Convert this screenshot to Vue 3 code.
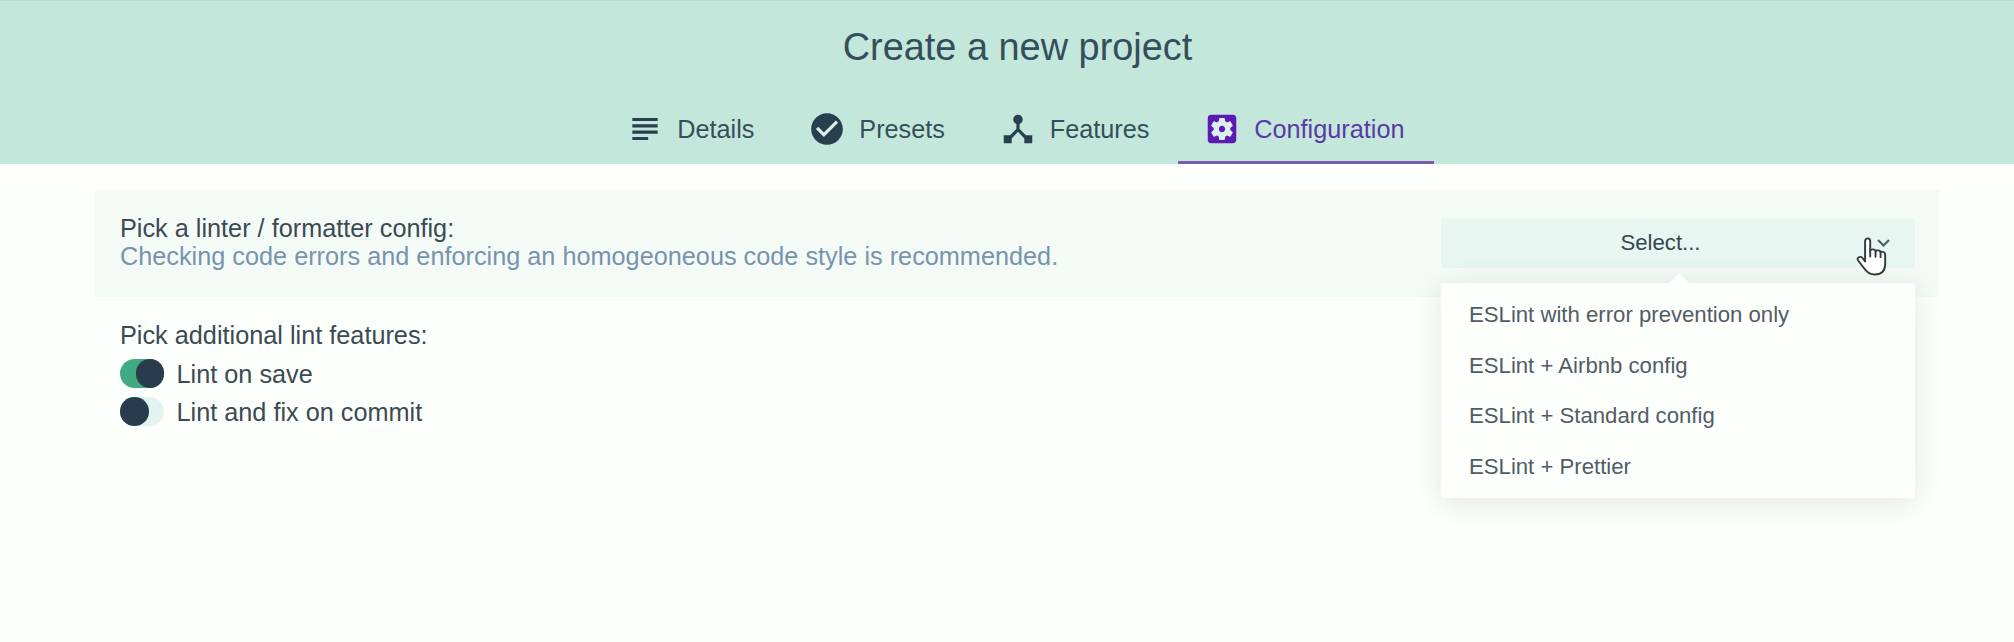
<script setup>
const tabs = [
  {
    label: 'Details',
    icon: 'M14 17H4v2h10v-2zm6-8H4v2h16V9zM4 15h16v-2H4v2zM4 5v2h16V5H4z',
  },
  {
    label: 'Presets',
    icon: 'M12 2C6.48 2 2 6.48 2 12s4.48 10 10 10 10-4.48 10-10S17.52 2 12 2zm-2 15l-5-5 1.41-1.41L10 14.17l7.59-7.59L19 8l-9 9z',
    filled: true,
  },
  {
    label: 'Features',
    icon: 'M17 16l-4-4V8.82C14.16 8.4 15 7.3 15 6c0-1.66-1.34-3-3-3S9 4.34 9 6c0 1.3.84 2.4 2 2.82V12l-4 4H3v5h5v-3.05l4-4.2 4 4.2V21h5v-5h-4z',
  },
  {
    label: 'Configuration',
    icon: 'M12 10c-1.1 0-2 .9-2 2s.9 2 2 2 2-.9 2-2-.9-2-2-2zm7-7H5c-1.11 0-2 .9-2 2v14c0 1.1.89 2 2 2h14c1.11 0 2-.9 2-2V5c0-1.1-.89-2-2-2zm-1.75 9c0 .23-.02.46-.05.68l1.48 1.16c.13.11.17.3.08.45l-1.4 2.42c-.09.15-.27.21-.43.15l-1.74-.7c-.36.28-.76.51-1.18.69l-.26 1.85c-.03.17-.18.3-.35.3h-2.8c-.17 0-.32-.13-.35-.29l-.26-1.85c-.43-.18-.82-.41-1.18-.69l-1.74.7c-.16.06-.34 0-.43-.15l-1.4-2.42c-.09-.15-.05-.34.08-.45l1.48-1.16c-.03-.23-.05-.46-.05-.69 0-.23.02-.46.05-.68l-1.48-1.16c-.13-.11-.17-.3-.08-.45l1.4-2.42c.09-.15.27-.21.43-.15l1.74.7c.36-.28.76-.51 1.18-.69l.26-1.85c.03-.17.18-.3.35-.3h2.8c.17 0 .32.13.35.29l.26 1.85c.43.18.82.41 1.18.69l1.74-.7c.16-.06.34 0 .43.15l1.4 2.42c.09.15.05.34-.08.45l-1.48 1.16c.03.23.05.46.05.69z',
    active: true,
    filled: true,
  },
]

const options = [
  'ESLint with error prevention only',
  'ESLint + Airbnb config',
  'ESLint + Standard config',
  'ESLint + Prettier',
]

const features = [
  { label: 'Lint on save', on: true },
  { label: 'Lint and fix on commit', on: false },
]
</script>

<template>
  <div class="page">
    <header class="header">
      <h1 class="title">Create a new project</h1>
      <nav class="tabs">
        <div v-for="tab in tabs" :key="tab.label" class="tab" :class="{ active: tab.active }">
          <svg class="tab-icon" viewBox="0 0 24 24">
            <rect v-if="tab.filled" class="icon-fill" x="5" y="5" width="14" height="14" />
            <path :d="tab.icon" />
          </svg>
          <span>{{ tab.label }}</span>
        </div>
      </nav>
    </header>

    <main class="content">
      <section class="prompt highlighted">
        <div class="text">
          <div class="message">Pick a linter / formatter config:</div>
          <div class="description">Checking code errors and enforcing an homogeoneous code style is recommended.</div>
        </div>
        <div class="select">
          <div class="select-button">
            <span>Select...</span>
            <svg class="chevron" viewBox="0 0 13 8"><path d="M1 1l5.500 5.500L12 1" /></svg>
          </div>
          <div class="popup">
            <div class="arrow"></div>
            <div v-for="option in options" :key="option" class="option">{{ option }}</div>
          </div>
          <svg class="pointer" viewBox="0 0 29 39" preserveAspectRatio="none">
            <path d="M8.500 24.500V4.300C8.500 .400 13.300 .400 13.300 4.300V13.500C14.500 11.700 18 12 18.300 14.200C19.500 12.700 22.700 13.200 23 15.200C24.500 14 27.300 15 27.300 17.500V27C27.300 34 23.500 37.500 17.500 37.500C12 37.500 9.500 34.500 7 30.500L2 23.500C.200 20.500 4 18.800 6 21Z" />
            <path d="M13.300 13v6.500M18.300 14v5.800M23 15.200v5" />
          </svg>
        </div>
      </section>

      <section class="prompt-list">
        <div class="message">Pick additional lint features:</div>
        <div v-for="feature in features" :key="feature.label" class="feature">
          <span class="switch" :class="{ on: feature.on }"><span class="knob"></span></span>
          <span>{{ feature.label }}</span>
        </div>
      </section>
    </main>
  </div>
</template>

<style>
body {
  background: #fdfffc;
}
</style>

<style scoped>
.page {
  box-sizing: border-box;
  height: 642px;
  overflow: hidden;
  background: #fdfffc;
  color: #344f5b;
  font-family: 'Liberation Sans', Arial, sans-serif;
  font-size: 25.27px;
  line-height: 28px;
}

.header {
  box-sizing: border-box;
  height: 164px;
  padding: 24px 0 0 21px;
  border-top: 1px solid #bfd8d2;
  background: #c4e7dc;
  display: flex;
  flex-direction: column;
  align-items: center;
  justify-content: space-between;
}

.title {
  margin: 0;
  font-size: 37.9px;
  line-height: 44px;
  font-weight: 400;
}

.tabs {
  display: flex;
  height: 69px;
}

.tab {
  box-sizing: border-box;
  display: flex;
  align-items: center;
  gap: 12.8px;
  padding: 2px 29px 0 25px;
  border-bottom: 3px solid transparent;
  white-space: nowrap;
}

.tab.active {
  border-bottom-color: #7f58b4;
  color: #5b3aa5;
}

.tab-icon {
  width: 38px;
  height: 38px;
  fill: #273f4f;
}

.active .tab-icon {
  fill: #5c1bb5;
}

.tab-icon .icon-fill {
  fill: #dcefec;
}

.content {
  padding: 26px 75px 0 94px;
}

.prompt {
  box-sizing: border-box;
  height: 107px;
  padding: 0 24.5px 0 26px;
  display: flex;
  align-items: center;
  justify-content: space-between;
}

.highlighted {
  background: #f4fbf7;
}

.text {
  padding-bottom: 3px;
}

.message {
  color: #3b4a53;
}

.description {
  color: #7893ae;
}

.select {
  position: relative;
  width: 474px;
  margin-bottom: 1px;
  font-size: 22.17px;
}

.select-button {
  height: 50px;
  border-radius: 3px;
  background: #e7f6f1;
  color: #344752;
  display: flex;
  align-items: center;
  justify-content: center;
  padding-right: 34px;
}

.chevron {
  position: absolute;
  right: 25px;
  top: 21px;
  width: 13px;
  height: 8px;
  fill: none;
  stroke: #4d6268;
  stroke-width: 2.2;
}

.popup {
  position: absolute;
  left: 0;
  top: 65px;
  box-sizing: border-box;
  width: 474px;
  height: 215px;
  padding: 7px 0;
  border-radius: 3px;
  background: #fdfffc;
  box-shadow: 0 5px 32px rgba(0, 0, 0, 0.11);
  color: #515c67;
}

.arrow {
  position: absolute;
  left: 228px;
  top: -10px;
  width: 0;
  height: 0;
  border: 10px solid transparent;
  border-top: 0;
  border-bottom-color: #fdfffc;
}

.option {
  height: 50.5px;
  line-height: 50.5px;
  padding-left: 28.5px;
}

.pointer {
  position: absolute;
  left: 415px;
  top: 18.5px;
  width: 31px;
  height: 39px;
  fill: #fff;
  stroke: #343b3e;
  stroke-width: 1.8;
  stroke-linejoin: round;
  stroke-linecap: round;
}

.prompt-list {
  padding: 24px 26px 0;
}

.feature {
  display: flex;
  align-items: center;
  gap: 12.5px;
  height: 38px;
  color: #3b4a53;
}

.message + .feature {
  margin-top: 5.5px;
}

.switch {
  width: 44px;
  height: 28.5px;
  border-radius: 15px;
  background: #e3f3f0;
  display: flex;
}

.switch.on {
  background: #40ab82;
  justify-content: flex-end;
}

.knob {
  width: 28.5px;
  height: 28.5px;
  border-radius: 50%;
  background: #293c4d;
}
</style>
